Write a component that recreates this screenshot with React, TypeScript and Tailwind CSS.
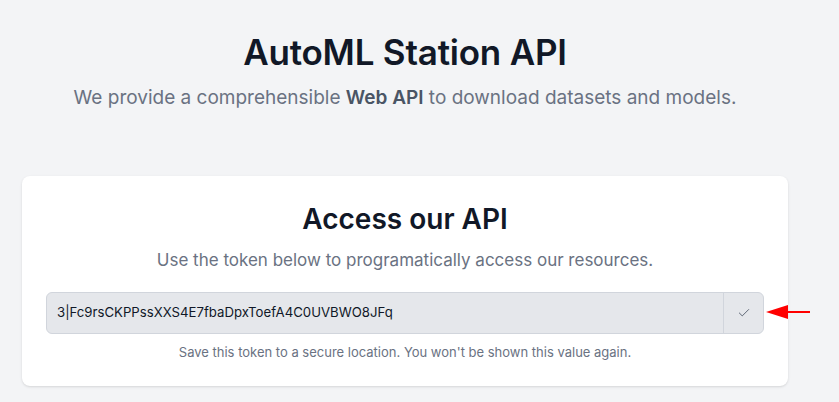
import { Check } from "lucide-react";

export default function App() {
  const token = "3|Fc9rsCKPPssXXS4E7fbaDpxToefA4C0UVBWO8JFq";

  return (
    <div
      className="min-h-[402px] w-full bg-[#f3f4f6] text-gray-900"
      style={{ fontFamily: "Inter, 'Noto Sans', sans-serif" }}
    >
      <div className="relative w-[810px]">
        <header className="flex flex-col items-center pt-[30px]">
          <h1 className="text-[35px] font-semibold leading-[44px] tracking-[-0.2px] text-[#111827]">
            AutoML Station API
          </h1>
          <p className="mt-[10px] text-[19px] leading-[28px] text-gray-500">
            We provide a comprehensible <span className="font-semibold text-gray-600">Web API</span> to download
            datasets and models.
          </p>
        </header>

        <div className="mx-[22px] mt-[64px] rounded-lg bg-white px-6 pb-[26px] pt-[25px] shadow">
          <div className="flex flex-col items-center">
            <h2 className="text-[28px] font-semibold leading-[36px] text-[#111827]">Access our API</h2>
            <p className="mt-[11px] text-[17px] leading-[24px] text-gray-500">
              Use the token below to programatically access our resources.
            </p>
          </div>

          <div className="mt-[20px] flex h-[42px] items-stretch overflow-hidden rounded-md border border-gray-300 bg-gray-200">
            <div className="flex flex-1 items-center px-[10px] text-[13.2px] text-gray-900">{token}</div>
            <button className="flex w-[40px] items-center justify-center border-l border-gray-300 text-gray-600">
              <Check className="h-[14px] w-[14px]" strokeWidth={1.5} />
            </button>
          </div>

          <p className="mt-[10px] text-center text-[13px] leading-[16px] text-gray-500">
            Save this token to a secure location. You won't be shown this value again.
          </p>
        </div>

        {/* annotation arrow */}
        <svg className="absolute left-[766px] top-[304px]" width="46" height="16" viewBox="0 0 46 16">
          <polygon points="0,8 22,1 22,15" fill="#ff0000" />
          <line x1="20" y1="8" x2="44" y2="8" stroke="#ff0000" strokeWidth="2" />
        </svg>
      </div>
    </div>
  );
}
